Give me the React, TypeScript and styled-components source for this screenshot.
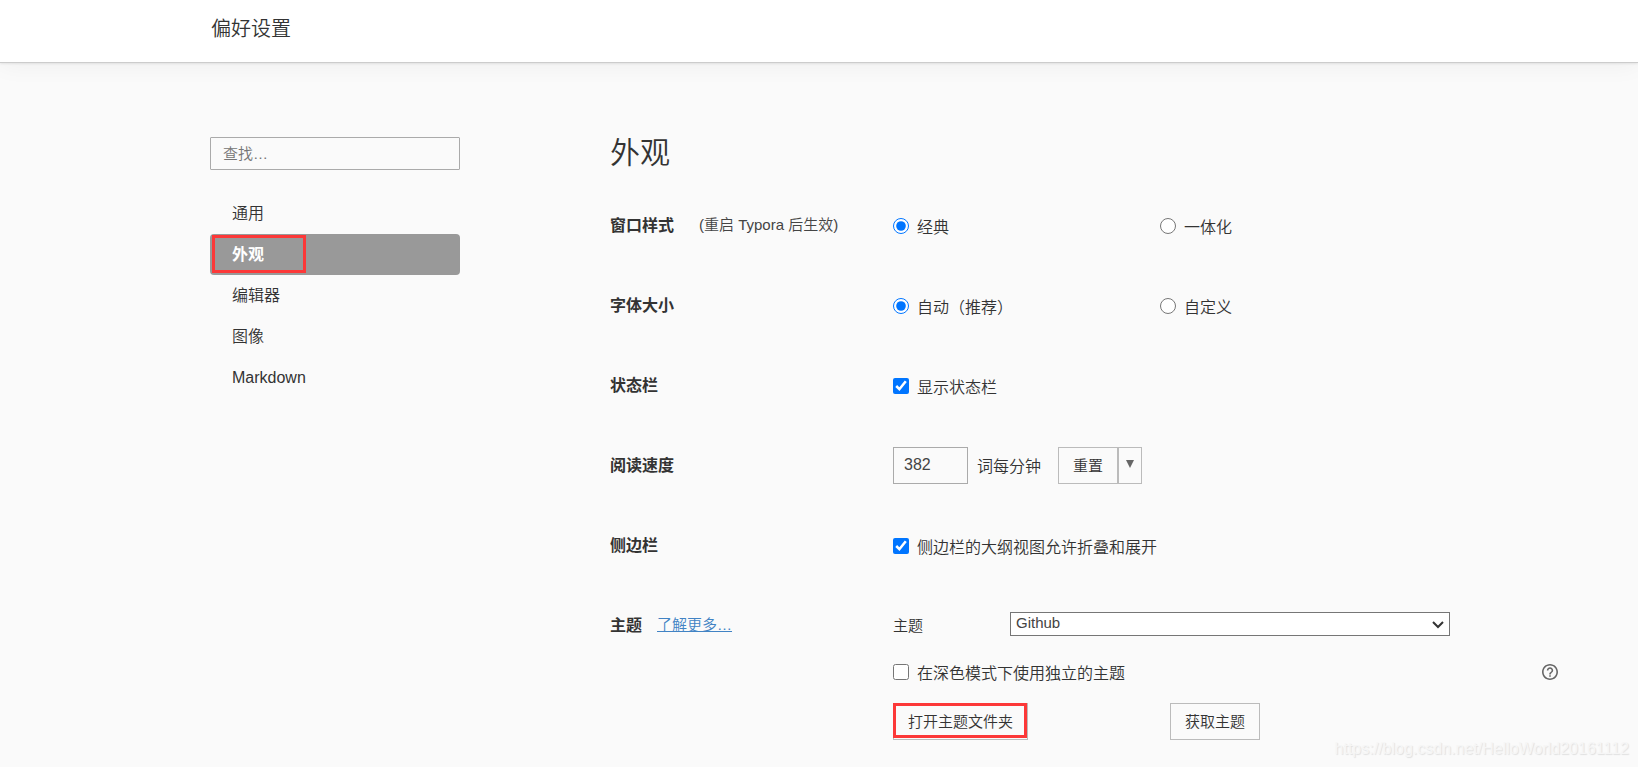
import React from "react";
import styled, { createGlobalStyle } from "styled-components";

const GlobalStyle = createGlobalStyle`
  *, *::before, *::after { box-sizing: border-box; }
  body {
    margin: 0;
    background: #fafafa;
    color: #333;
    font-family: "Liberation Sans", "Noto Sans CJK SC", sans-serif;
    font-size: 16px;
    font-weight: 350;
  }
  button, input, select { font: inherit; color: inherit; margin: 0; }
`;

const Page = styled.div`
  position: relative;
  min-height: 100vh;
`;

const Header = styled.header`
  height: 63px;
  padding: 17px 0 0 211px;
  background: #fff;
  border-bottom: 1px solid #ccc;
  box-shadow: 0 1px 2px rgba(0, 0, 0, 0.08), 0 2px 24px rgba(0, 0, 0, 0.05);
  font-size: 20px;
  line-height: 24px;
`;

const Body = styled.div`
  display: flex;
  gap: 150px;
  padding: 74px 80px 24px 210px;
`;

const Sidebar = styled.aside`
  flex: 0 0 250px;
`;

const Search = styled.input`
  display: block;
  width: 100%;
  height: 33px;
  padding: 0 12px;
  border: 1px solid #aaa;
  border-radius: 1px;
  background: transparent;
  font-size: 15px;
  &::placeholder { color: #757575; opacity: 1; }
`;

const Nav = styled.nav`
  display: flex;
  flex-direction: column;
  margin-top: 23px;
`;

const NavItem = styled.a<{ $active?: boolean }>`
  position: relative;
  padding-left: 22px;
  border-radius: 4px;
  line-height: 41px;
  text-decoration: none;
  color: ${(p) => (p.$active ? "#fff" : "#333")};
  background: ${(p) => (p.$active ? "#999" : "transparent")};
  font-weight: ${(p) => (p.$active ? 700 : "inherit")};
`;

const NavMark = styled.span`
  position: absolute;
  left: 2px;
  top: 1px;
  width: 94px;
  height: 38px;
  border: 3px solid #fc3838;
`;

const Main = styled.main`
  flex: 1;
  min-width: 0;
`;

const Title = styled.h1`
  margin: 0 0 36px;
  font-size: 30px;
  font-weight: 350;
  line-height: 32px;
`;

const Row = styled.section`
  display: grid;
  grid-template-columns: 283px 1fr;
  align-items: start;
  & + & { margin-top: 40px; }
`;

const RowHead = styled.div<{ $gap: number }>`
  display: flex;
  align-items: center;
  gap: ${(p) => p.$gap}px;
  height: 40px;
  padding-bottom: 3px;
  font-size: 15px;
  white-space: nowrap;
`;

const RowTitle = styled.h2`
  margin: 0;
  font-size: 16px;
  font-weight: 700;
`;

const Note = styled.span`
  color: #444;
`;

const Link = styled.a`
  color: #4183c4;
  text-decoration: underline;
`;

const Options = styled.div`
  display: grid;
  grid-template-columns: 267px 1fr;
  height: 40px;
  padding-top: 2px;
`;

const Choice = styled.label`
  display: flex;
  align-items: center;
  gap: 8px;
  white-space: nowrap;
  input {
    width: 16px;
    height: 16px;
    accent-color: #0075ff;
  }
`;

const Speed = styled.div`
  display: flex;
  align-items: center;
  height: 40px;
  white-space: nowrap;
`;

const SpeedLabel = styled.label`
  display: flex;
  align-items: center;
  gap: 9px;
  margin-right: 17px;
`;

const NumberBox = styled.input`
  width: 75px;
  height: 37px;
  padding: 0 10px;
  border: 1px solid #aaa;
  background: transparent;
  color: #444;
`;

const Button = styled.button<{ $pad?: number }>`
  position: relative;
  display: flex;
  align-items: center;
  justify-content: center;
  height: 37px;
  padding: 0 ${(p) => p.$pad ?? 14}px 2px;
  border: 1px solid #bbb;
  background: transparent;
  font-size: 15px;
  white-space: nowrap;
`;

const ButtonMark = styled.span`
  position: absolute;
  inset: -1px 0 1px -1px;
  border: 3px solid #fc3838;
`;

const ThemePanel = styled.div`
  padding-top: 7px;
`;

const ThemeField = styled.div`
  display: grid;
  grid-template-columns: 117px 1fr;
  align-items: center;
  padding-right: 108px;
  font-size: 15px;
`;

const SelectWrap = styled.div`
  position: relative;
  display: flex;
  svg {
    position: absolute;
    right: 6px;
    top: 9px;
    pointer-events: none;
  }
`;

const Select = styled.select`
  appearance: none;
  width: 100%;
  height: 24px;
  padding: 0 5px 3px;
  border: 1px solid #767676;
  border-radius: 0;
  background: #fff;
  color: #444;
`;

const DarkRow = styled.div`
  display: flex;
  align-items: center;
  justify-content: space-between;
  height: 31px;
  margin: 20px 0 16px;
`;

const HelpButton = styled.button`
  display: flex;
  padding: 0;
  border: 0;
  background: none;
  color: #666;
`;

const ThemeActions = styled.div`
  display: grid;
  grid-template-columns: 277px 1fr;
  justify-items: start;
`;

const Watermark = styled.div`
  position: absolute;
  right: 9px;
  bottom: 8px;
  color: #f6f6f6;
  text-shadow: 1px 1px 1px #e0e0e0;
  font-size: 16px;
  line-height: 20px;
`;

const ArrowDown = () => (
  <svg width="8" height="8" viewBox="0 0 8 8" aria-hidden="true">
    <path d="M0 0H8L4 8Z" fill="#666" />
  </svg>
);

const Chevron = () => (
  <svg width="12" height="8" viewBox="0 0 12 8" fill="none" aria-hidden="true">
    <path d="M1 1L6 6L11 1" stroke="#333" strokeWidth="2" />
  </svg>
);

const HelpIcon = () => (
  <svg width="16" height="16" viewBox="2 2 20 20" aria-hidden="true">
    <path
      fill="currentColor"
      d="M11 18h2v-2h-2v2zm1-16C6.48 2 2 6.48 2 12s4.48 10 10 10 10-4.48 10-10S17.52 2 12 2zm0 18c-4.41 0-8-3.59-8-8s3.59-8 8-8 8 3.59 8 8-3.59 8-8 8zm0-14c-2.21 0-4 1.79-4 4h2c0-1.1.9-2 2-2s2 .9 2 2c0 2-3 1.75-3 5h2c0-2.25 3-2.5 3-5 0-2.21-1.79-4-4-4z"
    />
  </svg>
);

const navItems = ["通用", "外观", "编辑器", "图像", "Markdown"];

export default function App() {
  return (
    <Page>
      <GlobalStyle />
      <Header>偏好设置</Header>
      <Body>
        <Sidebar>
          <Search type="text" placeholder="查找…" aria-label="查找" />
          <Nav>
            {navItems.map((name) => (
              <NavItem key={name} href="#" $active={name === "外观"}>
                {name}
                {name === "外观" && <NavMark />}
              </NavItem>
            ))}
          </Nav>
        </Sidebar>
        <Main>
          <Title>外观</Title>
          <Row>
            <RowHead $gap={25}>
              <RowTitle>窗口样式</RowTitle>
              <Note>(重启 Typora 后生效)</Note>
            </RowHead>
            <Options>
              <Choice><input type="radio" name="window" defaultChecked />经典</Choice>
              <Choice><input type="radio" name="window" />一体化</Choice>
            </Options>
          </Row>
          <Row>
            <RowHead $gap={25}><RowTitle>字体大小</RowTitle></RowHead>
            <Options>
              <Choice><input type="radio" name="size" defaultChecked />自动（推荐）</Choice>
              <Choice><input type="radio" name="size" />自定义</Choice>
            </Options>
          </Row>
          <Row>
            <RowHead $gap={25}><RowTitle>状态栏</RowTitle></RowHead>
            <Options>
              <Choice><input type="checkbox" defaultChecked />显示状态栏</Choice>
            </Options>
          </Row>
          <Row>
            <RowHead $gap={25}><RowTitle>阅读速度</RowTitle></RowHead>
            <Speed>
              <SpeedLabel>
                <NumberBox type="text" defaultValue="382" />
                词每分钟
              </SpeedLabel>
              <Button type="button">重置</Button>
              <Button type="button" $pad={7} aria-label="更多"><ArrowDown /></Button>
            </Speed>
          </Row>
          <Row>
            <RowHead $gap={25}><RowTitle>侧边栏</RowTitle></RowHead>
            <Options>
              <Choice><input type="checkbox" defaultChecked />侧边栏的大纲视图允许折叠和展开</Choice>
            </Options>
          </Row>
          <Row>
            <RowHead $gap={15}>
              <RowTitle>主题</RowTitle>
              <Link href="#">了解更多…</Link>
            </RowHead>
            <ThemePanel>
              <ThemeField>
                <label htmlFor="theme">主题</label>
                <SelectWrap>
                  <Select id="theme" defaultValue="Github"><option>Github</option></Select>
                  <Chevron />
                </SelectWrap>
              </ThemeField>
              <DarkRow>
                <Choice><input type="checkbox" />在深色模式下使用独立的主题</Choice>
                <HelpButton type="button" aria-label="帮助"><HelpIcon /></HelpButton>
              </DarkRow>
              <ThemeActions>
                <Button type="button">打开主题文件夹<ButtonMark /></Button>
                <Button type="button">获取主题</Button>
              </ThemeActions>
            </ThemePanel>
          </Row>
        </Main>
      </Body>
      <Watermark>https://blog.csdn.net/HelloWorld20161112</Watermark>
    </Page>
  );
}
